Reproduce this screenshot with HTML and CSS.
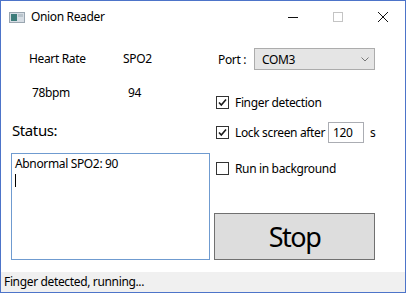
FILE: index.html
```html
<!DOCTYPE html>
<html lang="en">
	<head>
		<meta charset="UTF-8" />
		<title>Onion Reader</title>
		<link rel="stylesheet" href="styles.css">
	</head>
	<body>
		<div class="window">
			<div class="titlebar">
				<svg class="app-icon" width="16" height="11" viewBox="0 0 16 11">
					<rect x="0.5" y="0.5" width="15" height="10" fill="#d6dde4" stroke="#9aa6b0" />
					<rect x="2" y="2" width="6" height="7" fill="#3d7c7a" />
					<rect x="9" y="2" width="5" height="3" fill="#b9c4cc" />
				</svg>
				<span class="title">Onion Reader</span>
				<div class="caption">
					<div class="cap-btn">
						<svg width="12" height="12" viewBox="0 0 12 12"><path d="M1 6.5 H11" stroke="#111" stroke-width="1" /></svg>
					</div>
					<div class="cap-btn">
						<svg width="12" height="12" viewBox="0 0 12 12"><rect x="1.5" y="1.5" width="9" height="9" fill="none" stroke="#c4c4c4" /></svg>
					</div>
					<div class="cap-btn">
						<svg width="12" height="12" viewBox="0 0 12 12"><path d="M1 1 L11 11 M11 1 L1 11" stroke="#111" stroke-width="1" /></svg>
					</div>
				</div>
			</div>

			<div class="client">
				<div class="left">
					<div class="readings">
						<span class="col-a">Heart Rate</span>
						<span class="col-b">SPO2</span>
						<span class="col-a val-a">78bpm</span>
						<span class="col-b val-b">94</span>
					</div>
					<div class="status-label">Status:</div>
					<div class="log">
						<div>Abnormal SPO2: 90</div>
						<span class="caret"></span>
					</div>
				</div>

				<div class="right">
					<div class="port-row">
						<span class="port-label">Port :</span>
						<div class="combo">
							<span>COM3</span>
							<svg width="8" height="5" viewBox="0 0 8 5"><path d="M0.5 0.5 L4 4 L7.5 0.5" fill="none" stroke="#777" /></svg>
						</div>
					</div>

					<div class="check-row row-finger">
						<span class="box"><svg width="11" height="11" viewBox="0 0 11 11"><path d="M2 5.5 L4.3 8 L9 2.5" fill="none" stroke="#1a1a1a" stroke-width="1.6" /></svg></span>
						<span>Finger detection</span>
					</div>

					<div class="check-row row-lock">
						<span class="box"><svg width="11" height="11" viewBox="0 0 11 11"><path d="M2 5.5 L4.3 8 L9 2.5" fill="none" stroke="#1a1a1a" stroke-width="1.6" /></svg></span>
						<span class="lock-label">Lock screen after</span>
						<span class="num-input">120</span>
						<span class="unit">s</span>
					</div>

					<div class="check-row row-bg">
						<span class="box"></span>
						<span>Run in background</span>
					</div>

					<div class="stop-btn">Stop</div>
				</div>
			</div>

			<div class="statusbar">Finger detected, running...</div>
		</div>
	</body>
</html>
```

FILE: styles.css
```css
body {
	margin: 0;
	font-family: "Noto Sans", sans-serif;
	font-size: 12px;
	letter-spacing: -0.35px;
	color: #000;
	background: #fff;
}
.window {
	width: 406px;
	height: 293px;
	box-sizing: border-box;
	border: 1px solid #4d74c9;
	display: flex;
	flex-direction: column;
	background: #fff;
}
.titlebar {
	height: 29px;
	display: flex;
	align-items: center;
	padding-left: 8px;
}
.app-icon {
	margin-top: 3px;
}
.title {
	margin-left: 6px;
	margin-top: 2px;
}
.caption {
	margin-left: auto;
	display: flex;
	height: 100%;
}
.cap-btn {
	width: 45px;
	display: flex;
	align-items: center;
	justify-content: center;
	padding-top: 2px;
}
.client {
	flex: 1;
	display: flex;
}
.left {
	width: 203px;
	padding-left: 10px;
	display: flex;
	flex-direction: column;
}
.readings {
	display: grid;
	grid-template-columns: 94px auto;
	row-gap: 18px;
	margin-top: 21px;
	padding-left: 18px;
	line-height: 16px;
}
.val-a {
	padding-left: 3px;
}
.val-b {
	padding-left: 5px;
}
.status-label {
	font-size: 15px;
	line-height: 20px;
	margin-top: 19px;
	padding-left: 1px;
	letter-spacing: -0.4px;
}
.log {
	margin-top: 13px;
	width: 199px;
	height: 107px;
	box-sizing: border-box;
	border: 1px solid #6f9bd0;
	padding: 2px 3px;
	line-height: 16px;
}
.caret {
	display: block;
	width: 1px;
	height: 13px;
	margin-top: 2px;
	background: #000;
}
.right {
	flex: 1;
	display: flex;
	flex-direction: column;
}
.port-row {
	display: flex;
	align-items: center;
	margin-top: 18px;
	height: 22px;
	padding-left: 4px;
}
.port-label {
	width: 36px;
}
.combo {
	width: 121px;
	height: 22px;
	box-sizing: border-box;
	border: 1px solid #acacac;
	background: #e5e5e5;
	display: flex;
	align-items: center;
	justify-content: space-between;
	padding: 0 5px 0 7px;
}
.check-row {
	display: flex;
	align-items: center;
	height: 22px;
	padding-left: 2px;
}
.row-finger {
	margin-top: 21px;
}
.row-lock {
	margin-top: 8px;
}
.row-bg {
	margin-top: 14px;
}
.box {
	width: 13px;
	height: 13px;
	box-sizing: border-box;
	border: 1px solid #333;
	background: #fff;
	margin-right: 6px;
	display: flex;
	align-items: center;
	justify-content: center;
}
.lock-label {
	width: 93px;
}
.num-input {
	width: 36px;
	height: 21px;
	box-sizing: border-box;
	border: 1px solid #abadb3;
	padding-left: 4px;
	line-height: 19px;
}
.unit {
	margin-left: 6px;
}
.stop-btn {
	margin-top: 34px;
	width: 161px;
	height: 47px;
	box-sizing: border-box;
	border: 1px solid #707070;
	background: #dddddd;
	font-size: 27px;
	letter-spacing: -1.5px;
	display: flex;
	align-items: center;
	justify-content: center;
}
.statusbar {
	height: 20px;
	background: #f0f0f0;
	line-height: 20px;
	padding-left: 3px;
}
```
